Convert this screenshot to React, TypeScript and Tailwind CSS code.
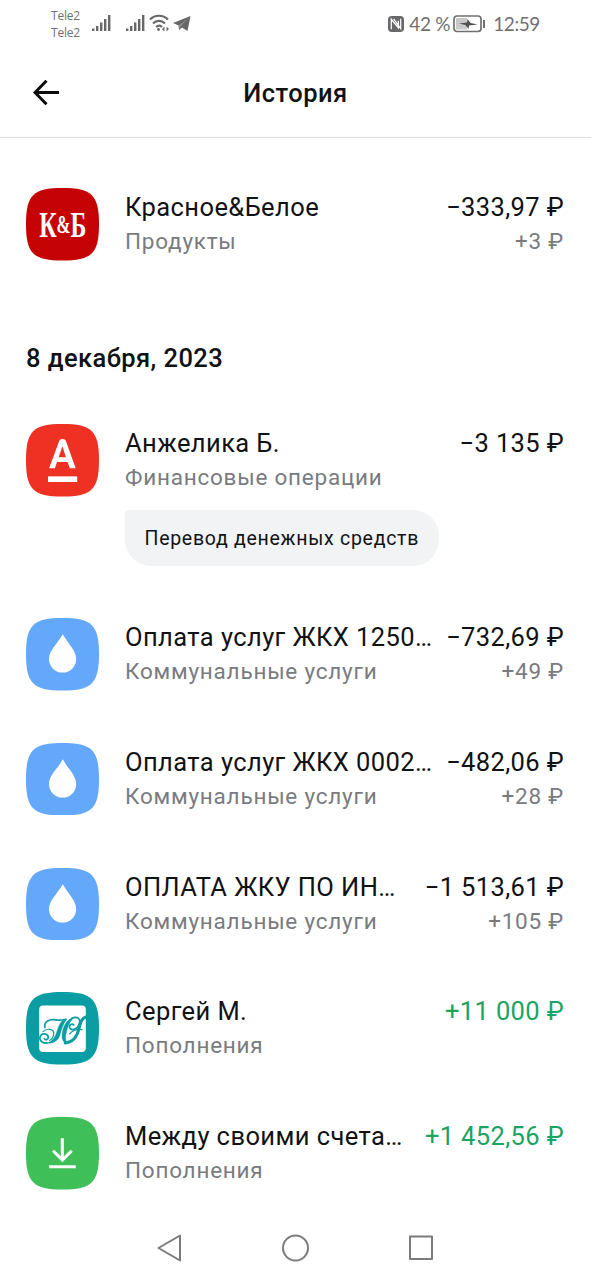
import type { ReactNode } from 'react'

type IconKind = 'kb' | 'alfa' | 'water' | 'jg' | 'income'

interface Operation {
  icon: IconKind
  title: string
  category: string
  amount: string
  bonus?: string
  note?: string
  income?: boolean
}

const recent: Operation[] = [
  { icon: 'kb', title: 'Красное&Белое', category: 'Продукты', amount: '−333,97 ₽', bonus: '+3 ₽' },
]

const december8: Operation[] = [
  { icon: 'alfa', title: 'Анжелика Б.', category: 'Финансовые операции', amount: '−3 135 ₽', note: 'Перевод денежных средств' },
  { icon: 'water', title: 'Оплата услуг ЖКХ 1250…', category: 'Коммунальные услуги', amount: '−732,69 ₽', bonus: '+49 ₽' },
  { icon: 'water', title: 'Оплата услуг ЖКХ 0002…', category: 'Коммунальные услуги', amount: '−482,06 ₽', bonus: '+28 ₽' },
  { icon: 'water', title: 'ОПЛАТА ЖКУ ПО ИН…', category: 'Коммунальные услуги', amount: '−1 513,61 ₽', bonus: '+105 ₽' },
  { icon: 'jg', title: 'Сергей М.', category: 'Пополнения', amount: '+11 000 ₽', income: true },
  { icon: 'income', title: 'Между своими счета…', category: 'Пополнения', amount: '+1 452,56 ₽', income: true },
]

const iconColors: Record<IconKind, string> = {
  kb: '#c60304',
  alfa: '#ef3124',
  water: '#64a8fb',
  jg: '#0a9da3',
  income: '#3fbf57',
}

const iconGlyphs: Record<IconKind, ReactNode> = {
  kb: (
    <text
      x="13" y="48.500" fill="#fff" fontFamily="Liberation Serif, serif" fontWeight="700"
      fontSize="36" textLength="46.500" lengthAdjust="spacingAndGlyphs"
    >
      К<tspan fontSize="25" dy="-4">&amp;</tspan><tspan dy="4">Б</tspan>
    </text>
  ),
  alfa: (
    <g fill="#fff">
      <path
        fillRule="evenodd"
        d="M32.200 18.300C32.900 16.200 33.800 15 36 15s3.200 1.200 3.900 3.300L49 44h-5.800l-2.200-6.200H30.600L28.500 44h-5.700zM32.200 33h7.200l-3.500-11z"
      />
      <path d="M21.700 52h28.800v5.600H21.700z" />
    </g>
  ),
  water: <path fill="#fff" d="M36.300 16.200C40.500 24.500 49.500 31.800 49.500 41a13.400 13.200 0 0 1-26.800 0C22.700 31.800 32 24.500 36.300 16.200z" />,
  jg: (
    <g>
      <rect x="13" y="13.500" width="46" height="46" rx="4" fill="#fff" />
      <g transform="translate(8 8) scale(.3333)" fill="none" stroke="#0a9da3" strokeLinecap="round">
        <path strokeWidth="5" d="M32 82C28 64 46 56 64 59 76 61 84 60 94 57" />
        <path fill="#0a9da3" strokeWidth="1" d="M88 59C74 68 72 82 66 98 60 114 52 126 34 128 54 132 70 122 76 106 81 90 84 74 96 58z" />
        <path strokeWidth="5" d="M38 128C20 130 12 114 21 104 28 98 42 101 42 112 41 119 33 120 30 115" />
        <path strokeWidth="3.500" d="M26 94C40 82 60 86 58 102 56 112 50 118 46 120" />
        <path fill="#0a9da3" strokeWidth="1" d="M120 51C100 54 88 72 84 94 80 114 84 127 98 130 92 120 92 108 96 94 100 76 108 60 120 51z" />
        <path strokeWidth="5" d="M112 54C128 48 140 56 133 72 126 90 108 92 105 82 103 74 112 68 117 74" />
        <path strokeWidth="9" d="M154 50C140 54 137 68 133 84 128 106 116 126 92 128" />
        <path strokeWidth="3.500" d="M105 101C114 90 128 86 142 88" />
      </g>
    </g>
  ),
  income: (
    <g fill="none" stroke="#fff" strokeWidth="3">
      <path d="M35.800 21v21.500M26.700 33.500l9.200 9.200 9.200-9.200M22.800 49.500h26.200" />
    </g>
  ),
}

function OperationIcon({ kind }: { kind: IconKind }) {
  return (
    <svg className="h-[72.500px] w-[73px] shrink-0" viewBox="0 0 72 72" preserveAspectRatio="none">
      <path d="M0 36C0 7 7 0 36 0s36 7 36 36-7 36-36 36S0 65 0 36z" fill={iconColors[kind]} />
      {iconGlyphs[kind]}
    </svg>
  )
}

function OperationRow({ op }: { op: Operation }) {
  return (
    <div className="flex items-start pt-[26px] pr-[27px] pb-[26.250px] pl-[26px]">
      <OperationIcon kind={op.icon} />
      <div className="ml-[26px] min-w-0 flex-1 pt-0.5">
        <div className="flex justify-between leading-[34px] text-[25.500px] whitespace-nowrap">
          <span className="tracking-[0.420px] text-[#111214]">{op.title}</span>
          <span className={`tracking-[0.370px] ${op.income ? 'text-[#1ca362]' : 'text-[#111214]'}`}>{op.amount}</span>
        </div>
        <div className="flex h-[34px] justify-between text-[22.500px] leading-[34px] tracking-[0.770px] text-[#7a7b7f]">
          <span>{op.category}</span>
          {op.bonus && <span>{op.bonus}</span>}
        </div>
        {op.note && (
          <div className="mt-4 flex h-[55.500px] w-[314px] items-center rounded-[26px] rounded-tl-[4px] bg-[#f2f3f5] pt-px pl-[19.500px] text-[19.500px] tracking-[0.720px] whitespace-nowrap text-[#111214]">
            {op.note}
          </div>
        )}
      </div>
    </div>
  )
}

function Signal() {
  return (
    <svg width="20" height="18" viewBox="0 0 20 18" fill="#68686a">
      <path d="M0 14.500h2.400V17H0zM4 12h2.400v5H4zM8 8.500h2.400V17H8zM12 5h2.400v12H12zM16 1h2.400v16H16z" />
    </svg>
  )
}

function StatusBar() {
  return (
    <div className="flex h-12 items-center pr-[51px] pl-[51px] font-['Open_Sans','Noto_Sans',sans-serif] text-[#707072]">
      <div className="w-7 text-[12px] leading-[17px] tracking-[-0.200px]">
        <div>Tele2</div>
        <div>Tele2</div>
      </div>
      <div className="ml-[13px] flex items-center pb-[2px]">
        <Signal />
        <span className="w-[13.500px]" />
        <Signal />
        <svg className="ml-[3px]" width="21" height="18" viewBox="0 0 21 18" fill="none" stroke="#68686a" strokeWidth="2.200">
          <path d="M1 5.500c5-5 13-5 18 0M4 9.500c3.500-3.400 8.500-3.400 12 0M7 13c2-1.800 4.500-1.800 6 0" />
          <circle cx="9.500" cy="15.500" r="1.400" fill="#68686a" stroke="none" />
          <path d="M15.500 12.500l-2.500 2.500 2.500 2.500zM17.500 12.500l2.500 2.500-2.500 2.500z" fill="#68686a" stroke="none" />
        </svg>
        <svg className="mt-px ml-[3px]" width="18" height="17" viewBox="0 0 18 17" fill="#68686a">
          <path d="M17.500 1L14.500 16 9 12.500 6 15 5.500 10.500 0 8z" />
          <path d="M14.500 4L6 10.500l.2 3 1.200-2.300z" fill="#999" />
        </svg>
      </div>
      <div className="ml-auto flex items-center pb-px text-[19px] leading-6">
        <svg width="16" height="16" viewBox="0 0 17 17">
          <rect x="0" y="0" width="17" height="17" rx="4" fill="#68686a" />
          <path d="M3.500 14V3.500l7.500 9V5M6 3l7.500 10.500V3" fill="none" stroke="#fff" strokeWidth="1.300" />
        </svg>
        <span className="ml-[5px] font-['Lato','Open_Sans',sans-serif] tracking-[-0.300px]">42 %</span>
        <svg className="ml-[3px]" width="33" height="18" viewBox="0 0 33 18">
          <rect x="1" y="1" width="27" height="15.500" rx="3" fill="#fff" stroke="#707072" strokeWidth="1.700" />
          <path d="M3 3h11v11.500H3z" fill="#c9c9ca" />
          <path d="M6 8.500l8-1 .5-3.500 3 4 7 1.500-8.500 1-.5 3.500-3-4z" fill="#505052" />
          <path d="M31 5v8" stroke="#707072" strokeWidth="2" />
        </svg>
        <span className="ml-[7px] font-['Lato','Open_Sans',sans-serif] tracking-[-0.400px]">12:59</span>
      </div>
    </div>
  )
}

function NavBar() {
  return (
    <svg className="mx-auto block" width="280" height="32" viewBox="0 0 280 32" fill="none" stroke="#7b7b7d" strokeWidth="2" strokeLinejoin="round">
      <path d="M24 3.500v25L2.500 16z" />
      <circle cx="139.500" cy="16" r="12.500" />
      <rect x="254" y="4.500" width="22" height="22.500" />
    </svg>
  )
}

export default function App() {
  return (
    <div className="flex h-[1280px] w-[591px] flex-col overflow-hidden bg-white font-['Roboto',sans-serif]">
      <StatusBar />
      <header className="grid h-[90px] shrink-0 grid-cols-[100px_1fr_100px] items-center border-b-[1.500px] border-[#dedfe1]">
        <svg className="ml-[33px]" width="27" height="27" viewBox="0 0 27 27" fill="none" stroke="#0b0b0c" strokeWidth="3">
          <path d="M26 13.500H2.500M13.500 1.800L2 13.500l11.500 11.700" />
        </svg>
        <h1 className="pt-[2px] text-center text-[25.500px] font-medium tracking-[0.500px] text-[#111214]">История</h1>
      </header>
      <main className="flex-1 pt-6">
        {recent.map(op => <OperationRow key={op.title} op={op} />)}
        <h2 className="flex h-[111.700px] items-center pt-8 pl-[26px] text-[25.500px] font-medium tracking-[0.430px] text-[#111214]">8 декабря, 2023</h2>
        {december8.map(op => <OperationRow key={op.title} op={op} />)}
      </main>
      <footer className="h-[48px] shrink-0">
        <NavBar />
      </footer>
    </div>
  )
}
